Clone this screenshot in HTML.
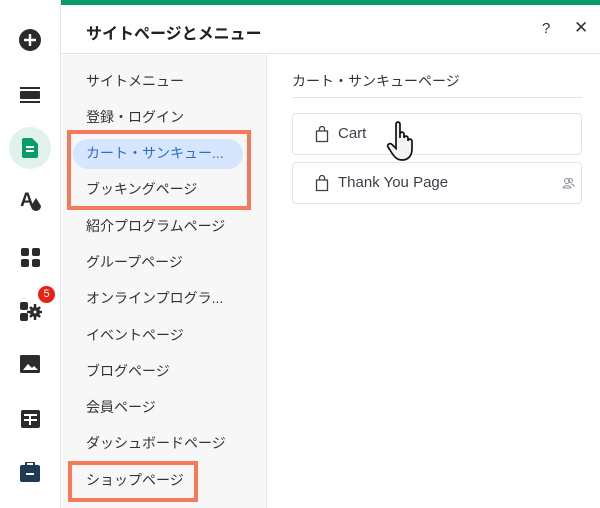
<!DOCTYPE html>
<html><head><meta charset="utf-8"><style>
*{margin:0;padding:0;box-sizing:border-box}
body{width:600px;height:508px;overflow:hidden;background:#fff;font-family:"Liberation Sans","Noto Sans CJK JP",sans-serif;position:relative;color:#333}
.abs{position:absolute}
.item{position:absolute;left:86px;font-size:14px;color:#333;line-height:18px;white-space:nowrap}
.card{position:absolute;left:292px;width:290px;height:42px;border:1px solid #e3e4e8;border-radius:4px;background:#fff}
.card span{position:absolute;left:45px;top:11px;font-size:15px;color:#3d3d4a}
</style></head><body>
<div class="abs" style="left:0;top:0;width:61px;height:508px;background:#fff;border-right:1px solid #e6e6ea"></div>
<div class="abs" style="left:61px;top:0;width:539px;height:5px;background:#0b9a6c"></div>
<div class="abs" style="left:61px;top:5px;width:539px;height:49px;border-bottom:1px solid #e3e4e8"></div>
<div class="abs" style="left:86px;top:20px;font-size:16px;font-weight:bold;color:#20202a">サイトページとメニュー</div>
<div class="abs" style="left:542px;top:20px;font-size:15px;color:#333">?</div>
<div class="abs" style="left:574px;top:18px;font-size:17px;color:#333">✕</div>
<div class="abs" style="left:62px;top:55px;width:205px;height:453px;background:#f7f7f8;border-right:1px solid #e3e4e8"></div>
<div class="abs" style="left:73px;top:139px;width:170px;height:30px;background:#d6e6fe;border-radius:15px"></div>
<div class="item" style="top:72px">サイトメニュー</div>
<div class="item" style="top:108px">登録・ログイン</div>
<div class="item" style="top:144px;color:#2f6bd8">カート・サンキュー...</div>
<div class="item" style="top:180px">ブッキングページ</div>
<div class="item" style="top:217px">紹介プログラムページ</div>
<div class="item" style="top:253px">グループページ</div>
<div class="item" style="top:289px">オンラインプログラ...</div>
<div class="item" style="top:326px">イベントページ</div>
<div class="item" style="top:362px">ブログページ</div>
<div class="item" style="top:398px">会員ページ</div>
<div class="item" style="top:434px">ダッシュボードページ</div>
<div class="item" style="top:471px">ショップページ</div>
<div class="abs" style="left:67px;top:130px;width:184px;height:80px;border:4px solid #f47a5a"></div>
<div class="abs" style="left:68px;top:461px;width:130px;height:41px;border:4px solid #f47a5a"></div>
<div class="abs" style="left:292px;top:71px;font-size:14px;color:#333">カート・サンキューページ</div>
<div class="abs" style="left:292px;top:97px;width:290px;height:1px;background:#e3e4e8"></div>
<div class="card" style="top:113px"><svg class="abs" style="left:22px;top:12px" width="14" height="17" viewBox="0 0 14 17" fill="none" stroke="#3d3d4a" stroke-width="1.3"><path d="M1.5 5h11v10.5h-11z"/><path d="M4.5 5V3a2.5 2.5 0 0 1 5 0v2"/></svg><span>Cart</span></div>
<div class="card" style="top:162px"><svg class="abs" style="left:22px;top:12px" width="14" height="17" viewBox="0 0 14 17" fill="none" stroke="#3d3d4a" stroke-width="1.3"><path d="M1.5 5h11v10.5h-11z"/><path d="M4.5 5V3a2.5 2.5 0 0 1 5 0v2"/></svg><span>Thank You Page</span><svg class="abs" style="left:269px;top:14px" width="13" height="12" viewBox="0 0 13 12" fill="none" stroke="#8a8fa0" stroke-width="1"><circle cx="5" cy="4" r="2.5"/><path d="M1 11c0-3 8-3 8 0z"/><circle cx="8.5" cy="3.5" r="2"/><path d="M9 7c2 0 3 1 3 3"/></svg></div>
<svg class="abs" style="left:386px;top:120px" width="34" height="42" viewBox="0 0 34 42"><path d="M10 4c0-2.5 4-2.5 4 0v14v-4c0-2.5 4-2.5 4 0v4c0-2.5 4-2.5 4 0v3c0-2.5 4-2.5 4 0v8c0 7-4 11-10 11c-5 0-8-3-12-10l-2-3c-1.5-2.5 2-4.5 4-2.5l4 4z" fill="#f4f4f4" stroke="#111" stroke-width="1.7"/></svg>
<svg class="abs" style="left:19px;top:29px" width="22" height="22"><circle cx="11" cy="11" r="11" fill="#2b2b2b"/><path d="M11 5v12M5 11h12" stroke="#fff" stroke-width="2.4"/></svg>
<svg class="abs" style="left:20px;top:87px" width="20" height="16"><rect x="0" y="0" width="20" height="2" fill="#2b2b2b"/><rect x="0" y="4" width="20" height="8" rx="1" fill="#2b2b2b"/><rect x="0" y="14" width="20" height="2" fill="#2b2b2b"/></svg>
<div class="abs" style="left:9px;top:127px;width:42px;height:42px;border-radius:50%;background:#e0f2ea"></div>
<svg class="abs" style="left:22px;top:138px" width="16" height="20"><path d="M2 0h8l6 6v12a2 2 0 0 1-2 2H2a2 2 0 0 1-2-2V2a2 2 0 0 1 2-2z" fill="#0b9a6c"/><path d="M4 9h8M4 13h8" stroke="#fff" stroke-width="2"/></svg>
<div class="abs" style="left:20px;top:190px;font-size:19px;font-weight:bold;color:#2b2b2b">A</div><svg class="abs" style="left:30px;top:198px" width="12" height="15"><path d="M6 0l5 8a5 5 0 1 1-10 0z" fill="#2b2b2b"/></svg>
<svg class="abs" style="left:21px;top:248px" width="19" height="19" fill="#2b2b2b"><rect width="8" height="8" rx="2"/><rect x="11" width="8" height="8" rx="2"/><rect y="11" width="8" height="8" rx="2"/><rect x="11" y="11" width="8" height="8" rx="2"/></svg>
<svg class="abs" style="left:20px;top:302px" width="22" height="19" fill="#2b2b2b"><rect width="8" height="8" rx="2"/><rect y="11" width="8" height="8" rx="2"/><circle cx="15" cy="10" r="5"/><path d="M15 2v16M7 10h16M10 5l10 10M20 5l-10 10" stroke="#2b2b2b" stroke-width="2.5"/><circle cx="15" cy="10" r="1.5" fill="#fff"/></svg>
<div class="abs" style="left:38px;top:286px;width:17px;height:17px;border-radius:50%;background:#e62214;color:#fff;font-size:11px;text-align:center;line-height:17px">5</div>
<svg class="abs" style="left:20px;top:355px" width="20" height="18"><rect width="20" height="18" rx="1.5" fill="#2b2b2b"/><path d="M3 15l5-6 4 4 2-2 4 4z" fill="#fff"/></svg>
<svg class="abs" style="left:21px;top:410px" width="19" height="18"><rect width="19" height="18" rx="2" fill="#2b2b2b"/><path d="M3 5h13M9 5v10M3 10h13" stroke="#fff" stroke-width="2"/></svg>
<svg class="abs" style="left:20px;top:462px" width="20" height="20"><rect x="6" y="0" width="8" height="4" rx="1" fill="none" stroke="#1f3a55" stroke-width="2"/><rect y="3" width="20" height="17" rx="2" fill="#1f3a55"/><path d="M6 12h8" stroke="#fff" stroke-width="2"/></svg>
</body></html>
